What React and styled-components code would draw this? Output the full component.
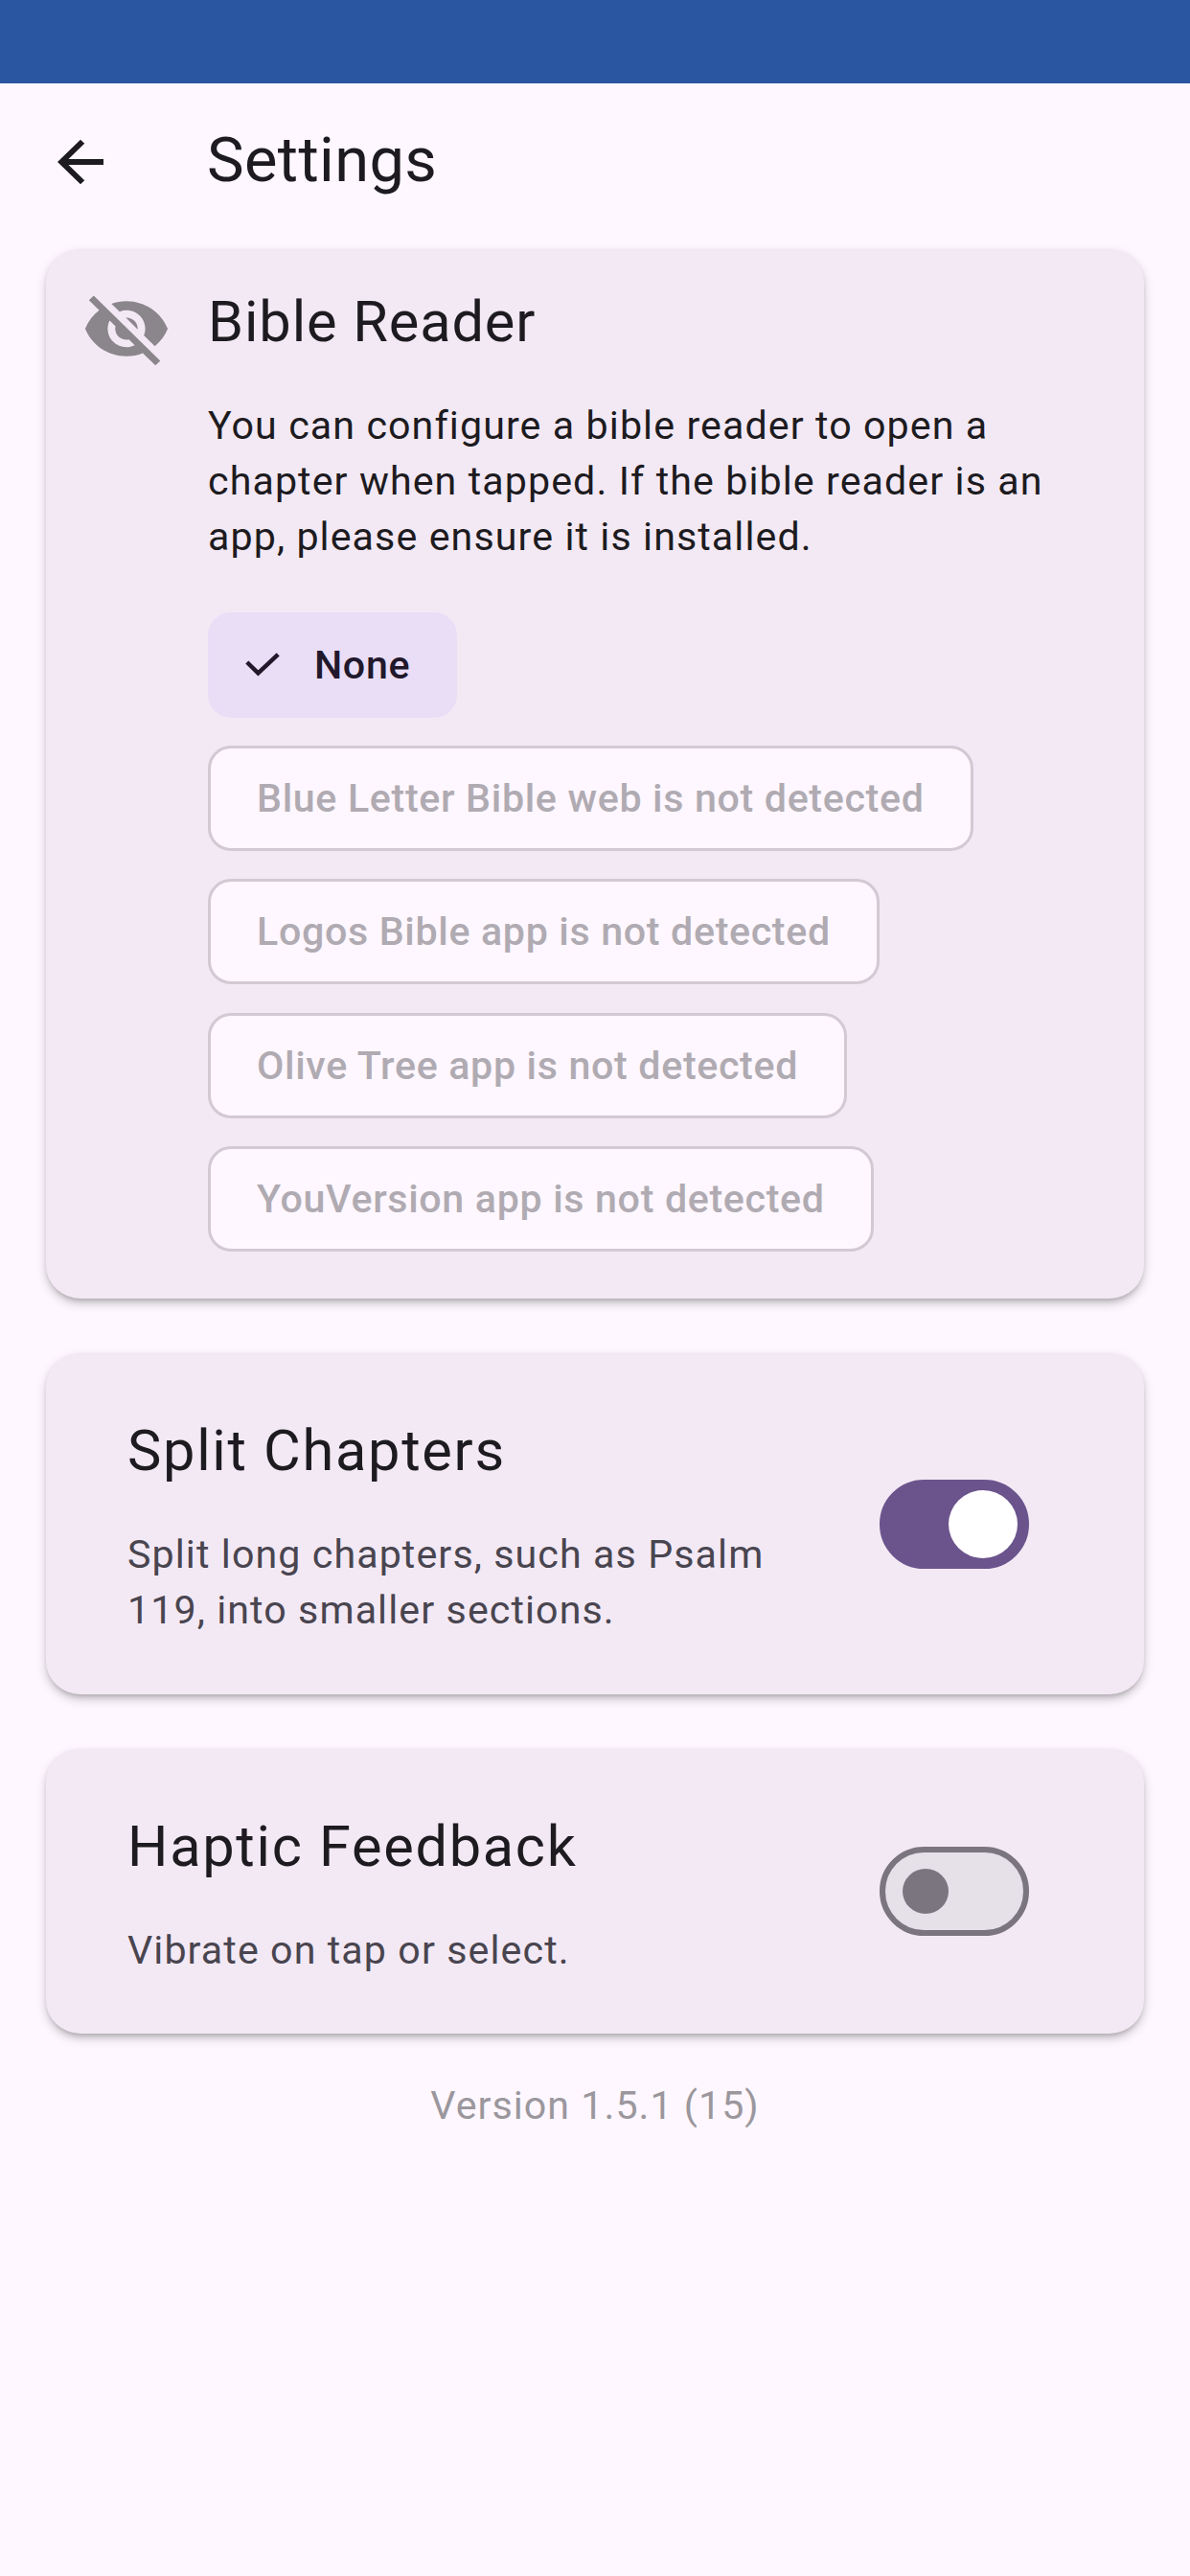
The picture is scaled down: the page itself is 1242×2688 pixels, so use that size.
import React, { useState } from "react";
import styled, { createGlobalStyle } from "styled-components";

const GlobalStyle = createGlobalStyle`
  *, *::before, *::after { box-sizing: border-box; }
  html, body { margin: 0; padding: 0; background: #fef7ff; }
  body { font-family: Roboto, "Noto Sans", sans-serif; color: #1d1b20; }
  button { font: inherit; color: inherit; border: 0; background: none; padding: 0; margin: 0; }
  h1, h2, p { margin: 0; font-weight: 400; white-space: nowrap; }
`;

const Screen = styled.div`
  width: 1242px;
  height: 2688px;
  display: flex;
  flex-direction: column;
  background: #fef7ff;
  overflow: hidden;
`;

const StatusBar = styled.div`
  flex: none;
  height: 87px;
  background: #2a55a0;
`;

const AppBar = styled.header`
  flex: none;
  height: 163px;
  display: flex;
  align-items: center;
  padding-left: 48px;
`;

const BackButton = styled.button`
  display: flex;
  width: 168px;
`;

const AppTitle = styled.h1`
  font-size: 65px;
  line-height: 82px;
  letter-spacing: 0.35px;
  padding-bottom: 4px;
`;

const CardList = styled.main`
  display: flex;
  flex-direction: column;
  gap: 57px;
  padding: 10px 48px 0;
`;

const Card = styled.section`
  display: flex;
  border-radius: 36px / 35px;
  background: #f3e9f5;
  height: ${(p) => p.$height}px;
  box-shadow:
    0 6px 4px -3px rgba(0, 0, 0, 0.08),
    0 5px 11px -1px rgba(0, 0, 0, 0.25),
    0 1px 4px 0 rgba(0, 0, 0, 0.05);
`;

const ReaderIcon = styled.div`
  display: flex;
  flex: none;
  width: 169px;
  padding: 37px 0 0 37px;
`;

const ReaderBody = styled.div`
  display: flex;
  flex-direction: column;
  align-items: flex-start;
  padding-top: 38px;
`;

const CardTitle = styled.h2`
  font-size: 59.5px;
  line-height: 76px;
  letter-spacing: ${(p) => p.$spacing}px;
`;

const Description = styled.p`
  font-size: 41.2px;
  line-height: 58.2px;
  letter-spacing: 1.08px;
  color: ${(p) => (p.$muted ? "#49454f" : "#1d1b20")};
  margin-top: 41px;
`;

const ChipList = styled.div`
  display: flex;
  flex-direction: column;
  align-items: flex-start;
  gap: 29.4px;
  margin-top: 49px;
`;

const Chip = styled.button`
  display: flex;
  align-items: center;
  height: 110px;
  border-radius: 24px;
  padding: 0 ${(p) => (p.$selected ? 46 : 48)}px 0 ${(p) => (p.$selected ? 36 : 48)}px;
  border: 3px solid ${(p) => (p.$selected ? "#eaddf6" : "#d2c9d3")};
  background: ${(p) => (p.$selected ? "#eaddf6" : "#fef7ff")};
  color: ${(p) => (p.$selected ? "#21182b" : "#b0abb2")};
  font-size: 41.2px;
  font-weight: 500;
  letter-spacing: 0.65px;
  line-height: 58px;
  white-space: nowrap;
`;

const CheckSlot = styled.span`
  display: flex;
  width: 72px;
`;

const SettingText = styled.div`
  display: flex;
  flex-direction: column;
  flex: 1;
  padding: 64px 0 0 85px;
`;

const SwitchSlot = styled.div`
  display: flex;
  align-items: center;
  padding-right: 120px;
`;

const Track = styled.button`
  display: flex;
  align-items: center;
  justify-content: ${(p) => (p.$on ? "flex-end" : "flex-start")};
  width: 156px;
  height: 93px;
  border-radius: 47px;
  border: 6px solid ${(p) => (p.$on ? "#6b538c" : "#7b757f")};
  background: ${(p) => (p.$on ? "#6b538c" : "#e6e0e8")};
  padding: 0 ${(p) => (p.$on ? 6 : 18)}px;
`;

const Thumb = styled.span`
  display: block;
  width: ${(p) => (p.$on ? 72 : 48)}px;
  height: ${(p) => (p.$on ? 71 : 47)}px;
  border-radius: 50%;
  background: ${(p) => (p.$on ? "#ffffff" : "#7b757f")};
`;

const Version = styled.footer`
  margin-top: 46px;
  text-align: center;
  font-size: 41.2px;
  line-height: 58px;
  letter-spacing: 1.02px;
  color: #9b979d;
`;

const BackArrow = () => (
  <svg width="72" height="70" viewBox="0 0 24 24" preserveAspectRatio="none" fill="#1d1b20">
    <path d="M20 11H7.83l5.59-5.59L12 4l-8 8 8 8 1.41-1.41L7.83 13H20v-2z" />
  </svg>
);

const EyeOff = () => (
  <svg width="94" height="92" viewBox="0 0 24 24" preserveAspectRatio="none" fill="#8b858c">
    <path d="M12 7c2.76 0 5 2.24 5 5 0 .65-.13 1.26-.36 1.83l2.92 2.92c1.51-1.26 2.7-2.89 3.43-4.75-1.73-4.39-6-7.5-11-7.5-1.4 0-2.74.25-3.98.7l2.16 2.16C10.74 7.13 11.35 7 12 7zM2 4.27l2.28 2.28.46.46C3.08 8.3 1.78 10.02 1 12c1.73 4.39 6 7.5 11 7.5 1.55 0 3.03-.3 4.38-.84l.42.42L19.73 22 21 20.73 3.27 3 2 4.27zM7.53 9.8l1.55 1.55c-.05.21-.08.43-.08.65 0 1.66 1.34 3 3 3 .22 0 .44-.03.65-.08l1.55 1.55c-.67.33-1.41.53-2.2.53-2.76 0-5-2.24-5-5 0-.79.2-1.53.53-2.2zm4.31-.78l3.15 3.15.02-.16c0-1.66-1.34-3-3-3l-.17.01z" />
  </svg>
);

const Check = () => (
  <svg width="36" height="25" viewBox="0 0 36 25" fill="none" stroke="#21182b" strokeWidth="4.4">
    <path d="M1.8 10L13.4 21.4L34.2 1.8" />
  </svg>
);

const READERS = [
  { name: "None", detected: true },
  { name: "Blue Letter Bible web is not detected" },
  { name: "Logos Bible app is not detected" },
  { name: "Olive Tree app is not detected" },
  { name: "YouVersion app is not detected" },
];

function Switch({ initial, label }) {
  const [on, setOn] = useState(initial);
  return (
    <SwitchSlot>
      <Track type="button" role="switch" aria-checked={on} aria-label={label} $on={on} onClick={() => setOn(!on)}>
        <Thumb $on={on} />
      </Track>
    </SwitchSlot>
  );
}

export default function App() {
  return (
    <>
      <GlobalStyle />
      <Screen>
        <StatusBar />
        <AppBar>
          <BackButton type="button" aria-label="Back">
            <BackArrow />
          </BackButton>
          <AppTitle>Settings</AppTitle>
        </AppBar>
        <CardList>
          <Card $height={1095}>
            <ReaderIcon>
              <EyeOff />
            </ReaderIcon>
            <ReaderBody>
              <CardTitle $spacing={0.9}>Bible Reader</CardTitle>
              <Description>
                You can configure a bible reader to open a<br />
                chapter when tapped. If the bible reader is an
                <br />
                app, please ensure it is installed.
              </Description>
              <ChipList>
                {READERS.map((r) => (
                  <Chip key={r.name} type="button" $selected={r.detected}>
                    {r.detected && (
                      <CheckSlot>
                        <Check />
                      </CheckSlot>
                    )}
                    {r.name}
                  </Chip>
                ))}
              </ChipList>
            </ReaderBody>
          </Card>
          <Card $height={356}>
            <SettingText>
              <CardTitle $spacing={1.7}>Split Chapters</CardTitle>
              <Description $muted>
                Split long chapters, such as Psalm
                <br />
                119, into smaller sections.
              </Description>
            </SettingText>
            <Switch initial={true} label="Split Chapters" />
          </Card>
          <Card $height={297}>
            <SettingText>
              <CardTitle $spacing={1.7}>Haptic Feedback</CardTitle>
              <Description $muted>Vibrate on tap or select.</Description>
            </SettingText>
            <Switch initial={false} label="Haptic Feedback" />
          </Card>
        </CardList>
        <Version>Version 1.5.1 (15)</Version>
      </Screen>
    </>
  );
}
